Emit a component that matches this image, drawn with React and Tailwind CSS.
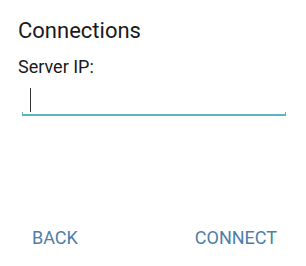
export default function App() {
  return (
    <div className="w-[306px] h-[266px] bg-white flex flex-col font-['Roboto',sans-serif]">
      <div className="pt-[18px] pl-[18px] text-[22px] leading-[26px] text-[#1a1a1a]">Connections</div>
      <div className="pt-[12px] pl-[18px] text-[18px] leading-[22px] text-[#1a1a1a]">Server IP:</div>
      {/* input field */}
      <div className="mt-[10px] ml-[22px] mr-[20px] h-[28px] flex items-start relative">
        <div className="ml-[8px] w-[1px] h-[24px] bg-[#333]" />
        <div className="absolute left-0 right-0 bottom-0 h-[2px] bg-[#5bb3c4]" />
        <div className="absolute left-0 bottom-0 w-[1px] h-[4px] bg-[#5bb3c4]" />
        <div className="absolute right-0 bottom-0 w-[1px] h-[4px] bg-[#5bb3c4]" />
      </div>
      <div className="mt-auto mb-[17px] flex justify-between pl-[32px] pr-[29px] text-[18px] leading-[22px] text-[#4d7fa6]">
        <span>BACK</span>
        <span>CONNECT</span>
      </div>
    </div>
  );
}
